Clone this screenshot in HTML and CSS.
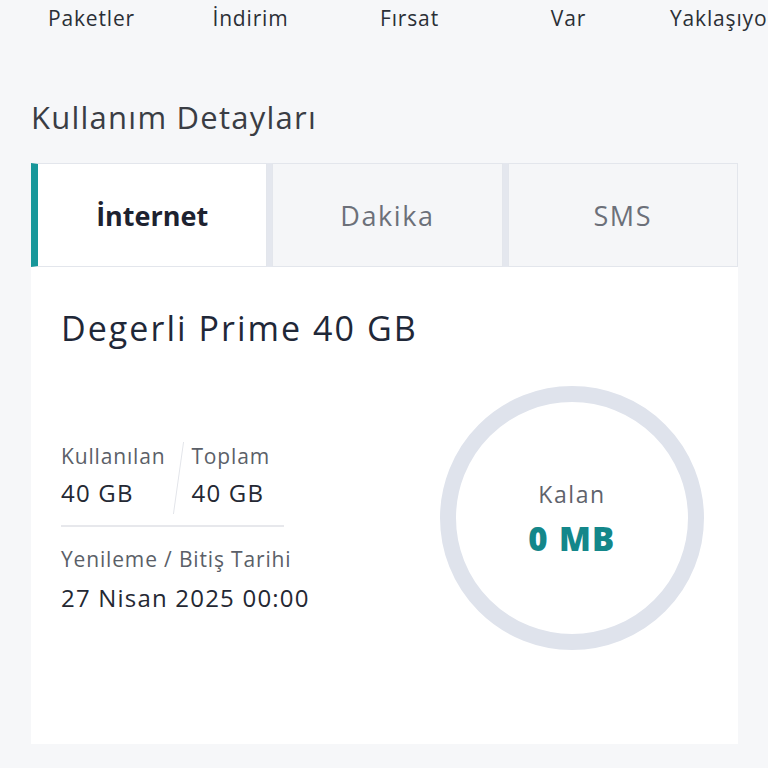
FILE: index.html
```html
<!DOCTYPE html>
<html lang="tr">
<head>
<meta charset="utf-8">
<link rel="stylesheet" href="styles.css">
</head>
<body>
<div class="page">
  <div class="shortcuts">
    <div class="sc">Paketler</div>
    <div class="sc">İndirim</div>
    <div class="sc">Fırsat</div>
    <div class="sc">Var</div>
    <div class="sc">Yaklaşıyor</div>
  </div>
  <h2 class="title">Kullanım Detayları</h2>
  <div class="tabs">
    <div class="tab active">İnternet</div>
    <div class="tab">Dakika</div>
    <div class="tab">SMS</div>
  </div>
  <div class="card">
    <div class="pkg">Degerli Prime 40 GB</div>
    <div class="body">
      <div class="info">
        <div class="pair">
          <div class="col">
            <div class="lbl">Kullanılan</div>
            <div class="val">40 GB</div>
          </div>
          <div class="slash"></div>
          <div class="col">
            <div class="lbl">Toplam</div>
            <div class="val">40 GB</div>
          </div>
        </div>
        <div class="sep"></div>
        <div class="lbl">Yenileme / Bitiş Tarihi</div>
        <div class="val date">27 Nisan 2025 00:00</div>
      </div>
      <div class="ring">
        <div class="kalan">Kalan</div>
        <div class="mb">0 MB</div>
      </div>
    </div>
  </div>
</div>
</body>
</html>
```
FILE: styles.css
```css
html, body { margin: 0; padding: 0; }
body {
  background: #f6f7f9;
  font-family: "Open Sans", "Noto Sans", sans-serif;
  width: 768px; height: 768px; overflow: hidden;
}
.page { padding: 0 31px 0 31px; }
.shortcuts {
  display: grid;
  grid-template-columns: repeat(5, 159px);
  margin-left: -19px;
  width: 756px;
  height: 34px;
  align-items: end;
  white-space: nowrap;
  overflow: hidden;
}
.sc {
  text-align: center;
  font-size: 21px;
  letter-spacing: 0.04em;
  color: #2b2f36;
  line-height: 28px;
  padding-bottom: 2px;
}
.sc:last-child { text-align: left; padding-left: 22px; }
.title {
  margin: 65px 0 0 0;
  font-weight: 400;
  font-size: 31px;
  letter-spacing: 0.04em;
  line-height: 36px;
  color: #3a3d44;
}
.tabs {
  margin-top: 28px;
  display: flex;
  gap: 5px;
  width: 707px;
  background: #e4e7ee;
}
.tab {
  flex: 1;
  height: 102px;
  background: #f5f6f8;
  border: 1px solid #e3e6ec;
  display: flex; align-items: center; justify-content: center;
  font-size: 27px;
  letter-spacing: 0.06em;
  color: #6c7079;
}
.tab.active {
  background: #ffffff;
  color: #1d2230;
  font-weight: 700;
  letter-spacing: 0;
  border-left: 7px solid #17979a;
}
.card {
  width: 707px;
  height: 477px;
  background: #ffffff;
  box-sizing: border-box;
  padding: 40px 30px 0 30px;
}
.pkg {
  font-size: 34px;
  font-weight: 500;
  letter-spacing: 0.06em;
  color: #1f2838;
  line-height: 42px;
}
.body { display: flex; justify-content: space-between; margin-top: 37px; }
.info { width: 223px; padding-top: 56px; white-space: nowrap; }
.pair { display: flex; gap: 0; }
.col { display: flex; flex-direction: column; }
.slash {
  width: 1px; height: 72px;
  background: #e3e5ea;
  transform: skewX(-8deg);
  margin: 0 12px 0 13px;
}
.lbl { font-size: 21px; letter-spacing: 0.04em; color: #5b5f68; line-height: 28px; }
.val { font-size: 24px; letter-spacing: 0.05em; color: #242833; line-height: 32px; margin-top: 7px; }
.sep { height: 2px; background: #e7e8ec; margin: 11px 0 18px; }
.date { margin-top: 9px; }
.ring {
  width: 264px; height: 264px;
  box-sizing: border-box;
  border: 16px solid #dfe3ec;
  border-radius: 50%;
  margin-right: 4px;
  display: flex; flex-direction: column; align-items: center; justify-content: center;
}
.kalan { font-size: 23px; letter-spacing: 0.07em; color: #5f636c; line-height: 30px; margin-top: 2px; }
.mb { font-size: 33px; font-weight: 800; letter-spacing: 0.04em; color: #14878a; line-height: 40px; margin-top: 10px; }
```
